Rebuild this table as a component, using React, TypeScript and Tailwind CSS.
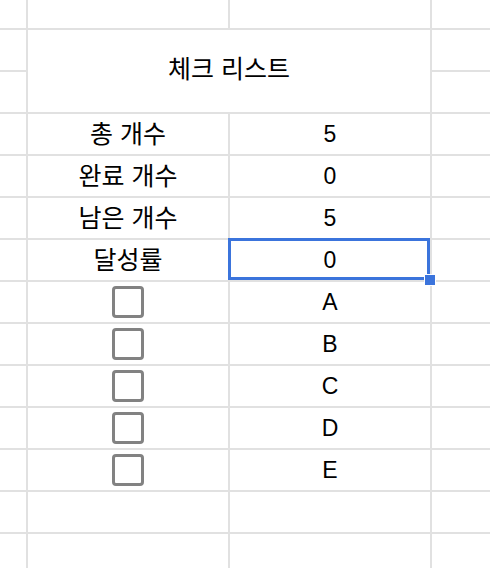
import React from "react";

const Cell = ({ children, className = "" }: { children?: React.ReactNode; className?: string }) => (
  <div className={"bg-white flex items-center justify-center " + className}>{children}</div>
);

const Box = () => (
  <div className="w-[32px] h-[32px] border-[3px] border-[#828282] rounded-[4px]" />
);

const Ko = ({ children }: { children: React.ReactNode }) => (
  <span className="text-[25px] leading-none">{children}</span>
);

export default function App() {
  const stats: [string, string, boolean][] = [
    ["총 개수", "5", false],
    ["완료 개수", "0", false],
    ["남은 개수", "5", false],
    ["달성률", "0", true],
  ];
  const items = ["A", "B", "C", "D", "E"];
  return (
    <div
      className="w-[490px] h-[568px] overflow-hidden bg-white text-black text-[23px]"
      style={{ fontFamily: '"Liberation Sans", "Noto Sans CJK KR", sans-serif' }}
    >
      <div className="grid grid-cols-[26px_200px_200px_1fr] grid-rows-[28px_repeat(14,40px)] gap-[2px] bg-[#e1e1e1]">
        <Cell />
        <Cell />
        <Cell />
        <Cell />

        <Cell />
        <Cell className="col-span-2 row-span-2 pb-[4px]">
          <Ko>체크 리스트</Ko>
        </Cell>
        <Cell />
        <Cell />
        <Cell />

        {stats.map(([label, value, sel]) => (
          <React.Fragment key={label}>
            <Cell />
            <Cell>
              <Ko>{label}</Ko>
            </Cell>
            <Cell className="relative">
              {value}
              {sel && (
                <>
                  <div className="absolute left-[-2px] top-[-2px] right-0 bottom-0 border-[3px] border-[#3b74dc] z-10" />
                  <div className="absolute right-[-6px] bottom-[-6px] w-[12px] h-[12px] bg-[#3b74dc] border border-white z-20" />
                </>
              )}
            </Cell>
            <Cell />
          </React.Fragment>
        ))}

        {items.map((it) => (
          <React.Fragment key={it}>
            <Cell />
            <Cell>
              <Box />
            </Cell>
            <Cell>{it}</Cell>
            <Cell />
          </React.Fragment>
        ))}

        {Array.from({ length: 8 }).map((_, i) => (
          <Cell key={"e" + i} />
        ))}
      </div>
    </div>
  );
}
